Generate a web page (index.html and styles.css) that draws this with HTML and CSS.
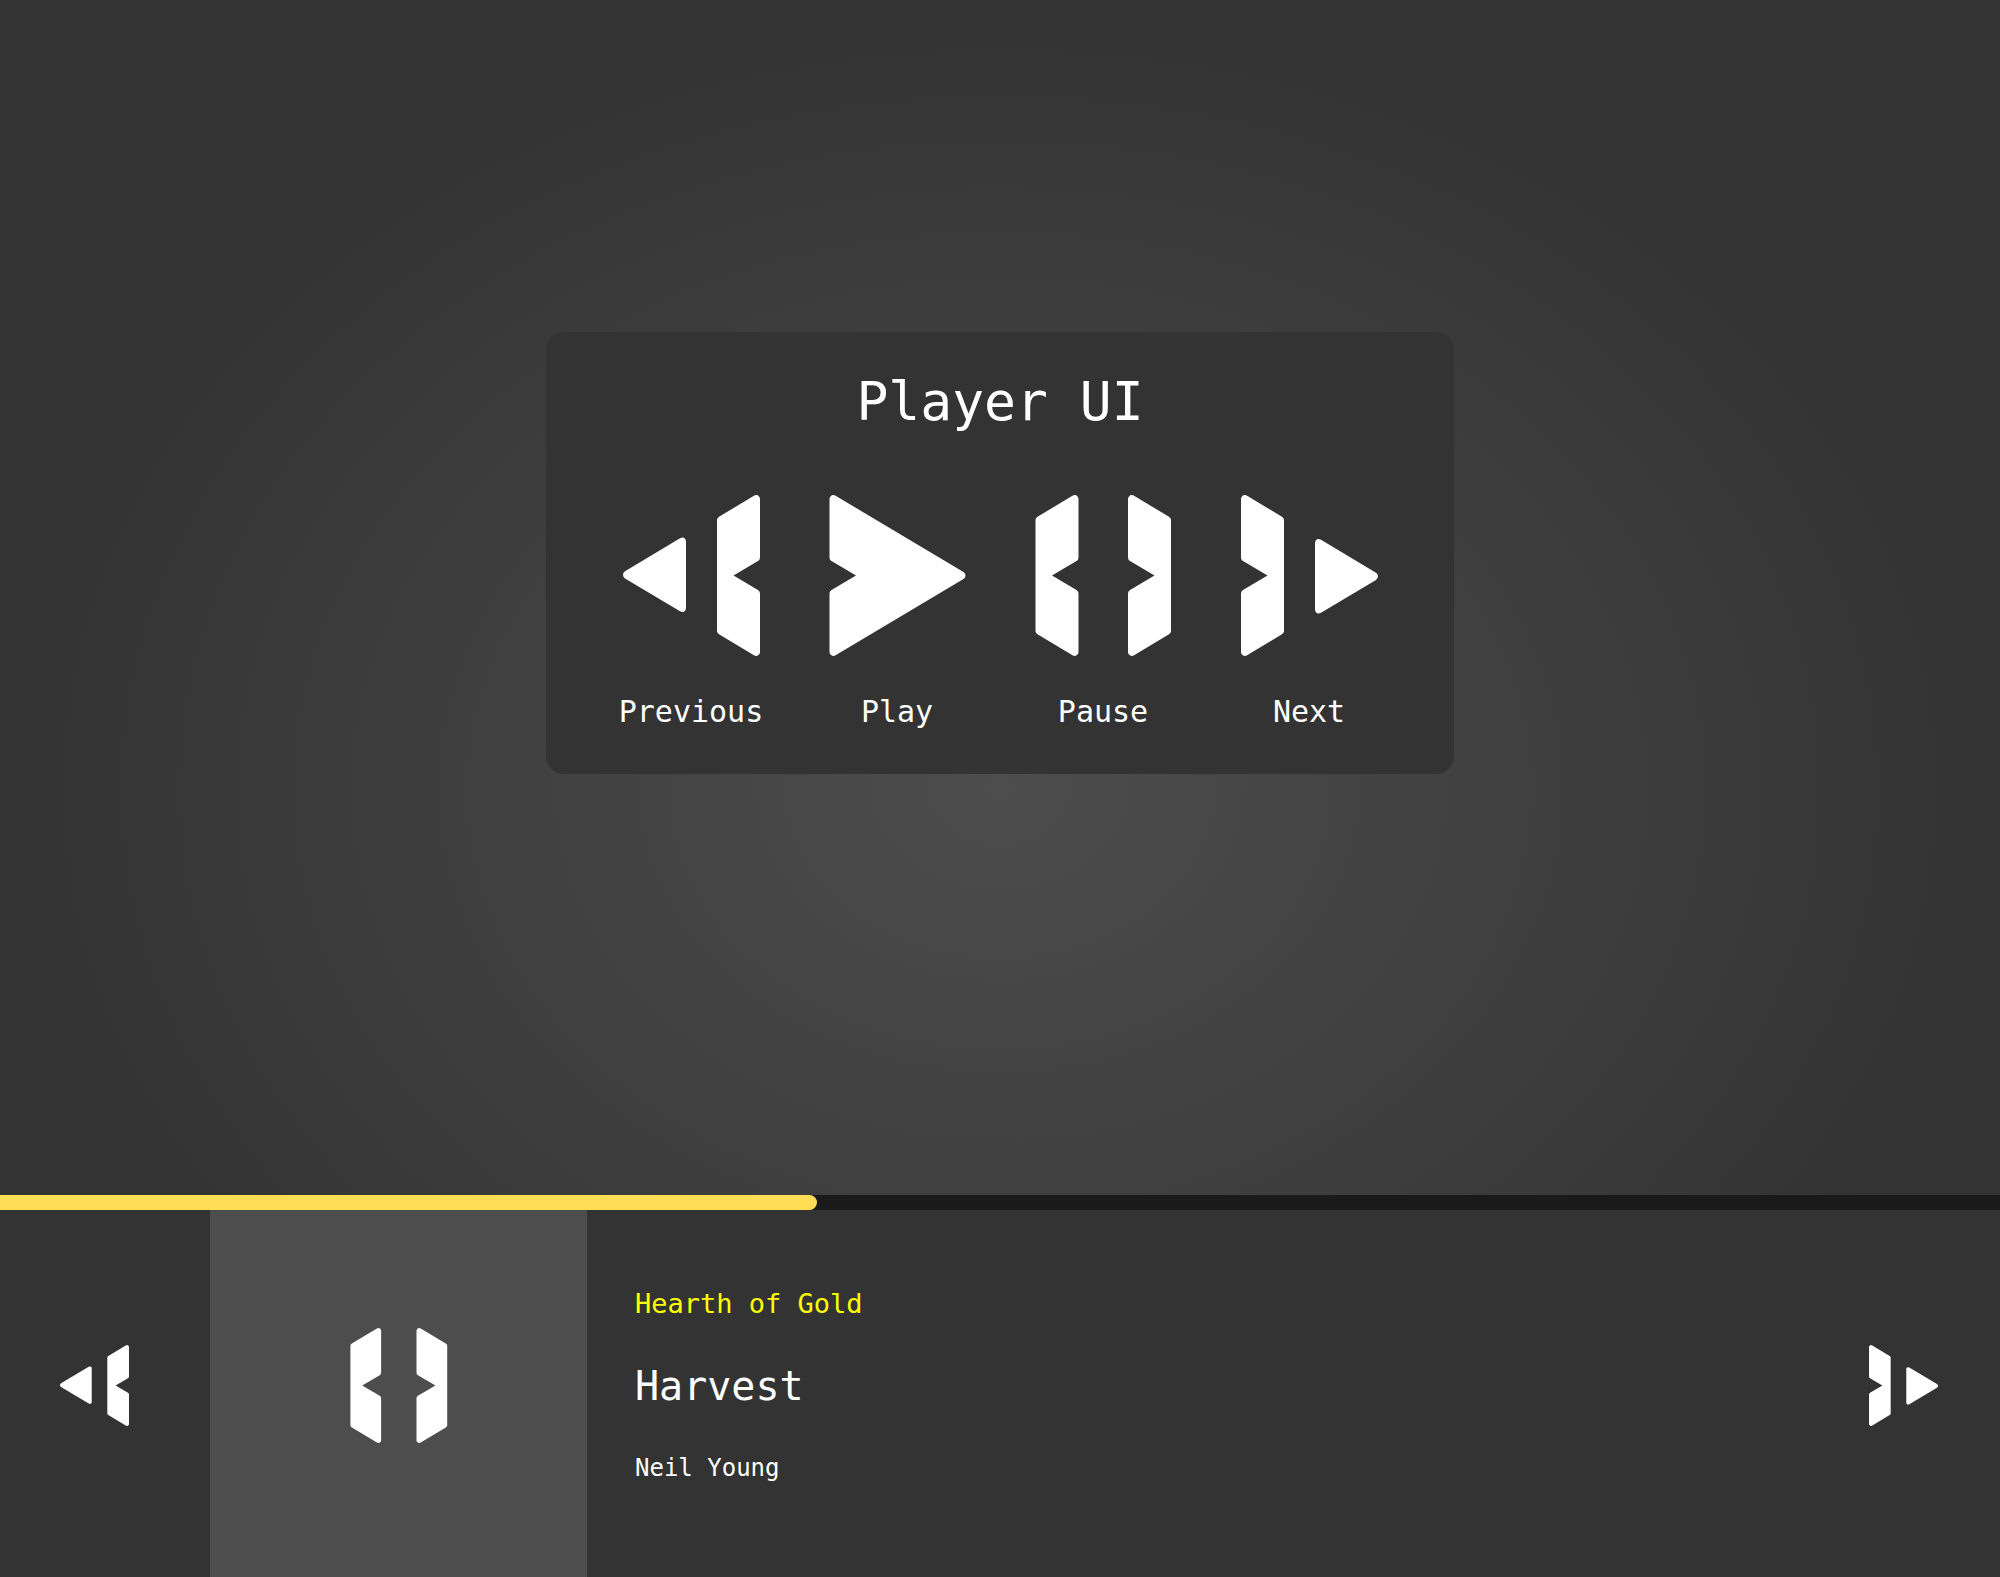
FILE: index.html
```html
<!DOCTYPE html>
<html lang="en">
<head>
  <meta charset="utf-8">
  <meta name="viewport" content="width=device-width, initial-scale=1">
  <title>Player UI</title>
  <link rel="stylesheet" href="styles.css">
</head>
<body>
  <svg class="sprite" aria-hidden="true">
    <defs>
      <path id="bracket" d="M0 25Q0 23 2 21.8L36.5 1Q40 -1 42 1.5Q43 2.5 43 4V62.5Q43 64.8 41 66L16.5 80.5L41 95Q43 96.2 43 98.5V157Q43 158.5 42 159.5Q40 162 36.5 160L2 139.2Q0 138 0 136Z"/>
      <path id="arrow" d="M0 37.3Q0 35 2 33.7L57 .8Q60.5 -1 62 1.3Q63 2.3 63 4V70.6Q63 72.3 62 73.3Q60.5 75.6 57 73.8L2 40.9Q0 39.6 0 37.3Z"/>
      <symbol id="icon-previous" viewBox="0 0 137 161">
        <use href="#arrow" y="42.5"/>
        <use href="#bracket" x="94"/>
      </symbol>
      <symbol id="icon-play" viewBox="0 0 136 161">
        <path d="M0 4Q0 2.5 1 1.5Q3 -1 6.5 1L134 77Q136 78.3 136 80.5Q136 82.7 134 84L6.5 160Q3 162 1 159.5Q0 158.5 0 157V98.5Q0 96.2 2 95L26.5 80.5L2 66Q0 64.8 0 62.5Z"/>
      </symbol>
      <symbol id="icon-pause" viewBox="0 0 136 161">
        <use href="#bracket"/>
        <use href="#bracket" transform="translate(135.5 0) scale(-1 1)"/>
      </symbol>
      <symbol id="icon-next" viewBox="0 0 137 161">
        <use href="#bracket" transform="translate(43 0) scale(-1 1)"/>
        <use href="#arrow" transform="translate(137 44) scale(-1 1)"/>
      </symbol>
    </defs>
  </svg>

  <main class="stage">
    <section class="card">
      <h1 class="card-title">Player UI</h1>
      <div class="controls">
        <button class="control" type="button">
          <svg class="icon icon-large" aria-hidden="true"><use href="#icon-previous"/></svg>
          <span class="label">Previous</span>
        </button>
        <button class="control" type="button">
          <svg class="icon icon-large" aria-hidden="true"><use href="#icon-play"/></svg>
          <span class="label">Play</span>
        </button>
        <button class="control" type="button">
          <svg class="icon icon-large" aria-hidden="true"><use href="#icon-pause"/></svg>
          <span class="label">Pause</span>
        </button>
        <button class="control" type="button">
          <svg class="icon icon-large" aria-hidden="true"><use href="#icon-next"/></svg>
          <span class="label">Next</span>
        </button>
      </div>
    </section>
  </main>

  <footer class="player">
    <progress class="progress" value="817" max="2000" aria-label="Track position"></progress>
    <div class="deck">
      <button class="deck-button previous" type="button" aria-label="Previous">
        <svg class="icon icon-small" aria-hidden="true"><use href="#icon-previous"/></svg>
      </button>
      <button class="deck-button pause" type="button" aria-label="Pause">
        <svg class="icon icon-medium" aria-hidden="true"><use href="#icon-pause"/></svg>
      </button>
      <div class="track">
        <p class="song">Hearth of Gold</p>
        <p class="album">Harvest</p>
        <p class="artist">Neil Young</p>
      </div>
      <button class="deck-button next" type="button" aria-label="Next">
        <svg class="icon icon-small" aria-hidden="true"><use href="#icon-next"/></svg>
      </button>
    </div>
  </footer>
</body>
</html>
```

FILE: styles.css
```css
* {
  box-sizing: border-box;
}

body {
  margin: 0;
  min-height: 100vh;
  display: flex;
  flex-direction: column;
  color: #fff;
  font-family: "DejaVu Sans Mono", monospace;
  background: #333 radial-gradient(ellipse closest-side at center, #4d4d4d, #333);
}

h1,
p {
  margin: 0;
  font-weight: 400;
}

button {
  padding: 0;
  border: 0;
  background: none;
  color: inherit;
  font: inherit;
  cursor: pointer;
}

.sprite {
  position: absolute;
  width: 0;
  height: 0;
}

.icon {
  display: block;
  fill: #fff;
}

.icon-large {
  width: 137px;
  height: 161px;
}

.icon-medium {
  width: 98px;
  height: 115px;
}

.icon-small {
  width: 69px;
  height: 81px;
}

/* Showcase card */

.stage {
  flex: 1;
  display: flex;
  align-items: center;
  justify-content: center;
  padding: 40px 40px 129px;
}

.card {
  width: 100%;
  max-width: 908px;
  padding: 38px 40px 42px;
  border-radius: 18px;
  background: #333;
  text-align: center;
}

.card-title {
  font-size: 53px;
  line-height: 64px;
}

.controls {
  display: flex;
  flex-wrap: wrap;
  justify-content: center;
  gap: 40px 60px;
  margin-top: 61px;
}

.control {
  display: flex;
  flex-direction: column;
  align-items: center;
  gap: 36px;
  width: 146px;
}

.label {
  font-size: 30px;
  line-height: 40px;
}

/* Player bar */

.progress {
  display: block;
  width: 100%;
  height: 15px;
  border: 0;
  appearance: none;
  background: #1a1a1a;
}

.progress::-webkit-progress-bar {
  background: #1a1a1a;
}

.progress::-webkit-progress-value {
  border-radius: 0 8px 8px 0;
  background: #fd5;
}

.deck {
  display: flex;
  min-height: 367px;
  background: #333;
}

.deck-button {
  display: flex;
  align-items: center;
  justify-content: center;
  padding-bottom: 16px;
}

.previous {
  width: 210px;
  padding-right: 22px;
}

.pause {
  width: 377px;
  background: #4d4d4d;
}

.track {
  flex: 1;
  display: flex;
  flex-direction: column;
  justify-content: center;
  gap: 42px;
  padding: 0 48px 16px;
}

.song {
  color: #ff0;
  font-size: 27px;
  line-height: 32px;
}

.album {
  font-size: 40px;
  line-height: 48px;
}

.artist {
  font-size: 24px;
  line-height: 32px;
}

.next {
  padding-right: 62px;
  padding-left: 62px;
}
```
